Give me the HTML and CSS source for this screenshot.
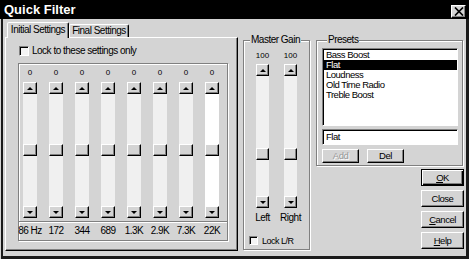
FILE: index.html
```html
<!DOCTYPE html>
<html>
<head>
<meta charset="utf-8">
<title>Quick Filter</title>
<link rel="stylesheet" href="styles.css">
</head>
<body>
<div class="win">
  <div class="titlebar">
    <span class="title">Quick Filter</span>
    <span class="close"><svg width="10" height="9" viewBox="0 0 10 9"><path d="M1 0.5 L9 8.5 M9 0.5 L1 8.5" stroke="#000" stroke-width="1.7" fill="none"/></svg></span>
  </div>
  <div class="frame">
    <div class="tabs">
      <div class="tabstrip">
        <div class="tab active">Initial Settings</div>
        <div class="tab">Final Settings</div>
      </div>
      <div class="panel">
        <div class="chk"><span class="cbox"></span><span>Lock to these settings only</span></div>
        <div class="eq">
          <div class="eq-sliders">
            <div class="band"><span class="val">0</span><div class="vs"><div class="sb up"></div><div class="track mid"><div class="thumb"></div></div><div class="sb down"></div></div></div>
            <div class="band"><span class="val">0</span><div class="vs"><div class="sb up"></div><div class="track mid"><div class="thumb"></div></div><div class="sb down"></div></div></div>
            <div class="band"><span class="val">0</span><div class="vs"><div class="sb up"></div><div class="track mid"><div class="thumb"></div></div><div class="sb down"></div></div></div>
            <div class="band"><span class="val">0</span><div class="vs"><div class="sb up"></div><div class="track mid"><div class="thumb"></div></div><div class="sb down"></div></div></div>
            <div class="band"><span class="val">0</span><div class="vs"><div class="sb up"></div><div class="track mid"><div class="thumb"></div></div><div class="sb down"></div></div></div>
            <div class="band"><span class="val">0</span><div class="vs"><div class="sb up"></div><div class="track mid"><div class="thumb"></div></div><div class="sb down"></div></div></div>
            <div class="band"><span class="val">0</span><div class="vs"><div class="sb up"></div><div class="track mid"><div class="thumb"></div></div><div class="sb down"></div></div></div>
            <div class="band"><span class="val">0</span><div class="vs"><div class="sb up"></div><div class="track mid focus"><div class="thumb"></div></div><div class="sb down"></div></div></div>
          </div>
          <div class="eq-labels">
            <span>86 Hz</span><span>172</span><span>344</span><span>689</span><span>1.3K</span><span>2.9K</span><span>7.3K</span><span>22K</span>
          </div>
        </div>
      </div>
    </div>

    <fieldset class="group master">
      <legend>Master Gain</legend>
      <div class="gains">
        <div class="gain"><span class="val">100</span><div class="vs m"><div class="sb up"></div><div class="track"><div class="thumb" style="margin-top:72px"></div></div><div class="sb down"></div></div><span class="glabel">Left</span></div>
        <div class="gain"><span class="val">100</span><div class="vs m"><div class="sb up"></div><div class="track"><div class="thumb" style="margin-top:72px"></div></div><div class="sb down"></div></div><span class="glabel">Right</span></div>
      </div>
      <div class="chk small"><span class="cbox"></span><span>Lock L/R</span></div>
    </fieldset>

    <div class="side">
      <fieldset class="group presets">
        <legend>Presets</legend>
        <div class="list">
          <div class="item">Bass Boost</div>
          <div class="item sel">Flat</div>
          <div class="item">Loudness</div>
          <div class="item">Old Time Radio</div>
          <div class="item">Treble Boost</div>
        </div>
        <div class="edit">Flat</div>
        <div class="pbtns"><span class="btn dis">Add</span><span class="btn">Del</span></div>
      </fieldset>
      <div class="dbtns">
        <span class="btn big def"><u>O</u>K</span>
        <span class="btn big">Close</span>
        <span class="btn big"><u>C</u>ancel</span>
        <span class="btn big"><u>H</u>elp</span>
      </div>
    </div>
  </div>
</div>
</body>
</html>
```

FILE: styles.css
```css
* { box-sizing: border-box; margin: 0; padding: 0; }
html, body { width: 469px; height: 259px; overflow: hidden; }
body {
  background: #d4d4d4;
  font-family: "Liberation Sans", Arial, sans-serif;
  font-size: 10px;
  letter-spacing: -0.5px;
  line-height: 12px;
  color: #000;
  white-space: nowrap;
}
.win { width: 469px; height: 259px; display: flex; flex-direction: column; }

.titlebar {
  flex: none; height: 19px; background: #000; color: #fff;
  display: flex; align-items: center; justify-content: space-between;
  padding: 0 3px 0 4px;
}
.title { font: bold 13px/19px "Liberation Sans", Arial, sans-serif; letter-spacing: 0; }
.close {
  width: 15px; height: 13px; background: #d4d4d4; margin-top: 3px;
  border: 1px solid; border-color: #fff #000 #000 #fff;
  box-shadow: inset -1px -1px #808080;
  display: flex; align-items: center; justify-content: center;
}

.frame {
  flex: 1; display: flex; align-items: flex-start;
  margin-left: 1px;
  border-left: 2px solid #1a1a1a; border-right: 3px solid #1a1a1a; border-bottom: 3px solid #1a1a1a;
  padding: 3px 0 0 2px;
}

/* tabs */
.tabs { width: 233px; flex: none; display: flex; flex-direction: column; }
.tabstrip { height: 15px; display: flex; align-items: flex-end; padding-left: 2px; }
.tab {
  height: 13px; width: 60px; text-align: center; font-size: 10px; line-height: 12px;
  border: 1px solid; border-bottom: none; border-color: #fff #000 transparent #fff;
  box-shadow: inset -1px 0 #808080; border-radius: 2px 2px 0 0;
}
.tab.active {
  height: 16px; width: 62px; margin-bottom: -1px; position: relative; z-index: 1;
  background: #d4d4d4; line-height: 14px;
}
.panel {
  height: 214px;
  border: 1px solid; border-color: #fff #000 #000 #fff;
  box-shadow: inset -1px -1px #808080;
  padding: 7px 0 0 12px;
}

.chk { display: flex; align-items: center; gap: 3px; height: 11px; margin-left: 1px; font-size: 10px; }
.cbox {
  flex: none; width: 10px; height: 10px; background: #f4f4f4;
  border: 1px solid; border-color: #808080 #fff #fff #808080;
  box-shadow: inset 1px 1px #000;
}

/* EQ */
.eq {
  margin-top: 7px; width: 210px;
  border: 1px solid #808080;
  box-shadow: inset 1px 1px #fff, 1px 1px #fff;
}
.eq-sliders {
  display: grid; grid-template-columns: repeat(8, 14px); column-gap: 12px;
  padding: 3px 0 3px 4px;
  border-bottom: 1px solid #808080;
  box-shadow: 0 1px #fff;
}
.band { display: flex; flex-direction: column; align-items: center; width: 14px; }
.val { display: block; height: 12px; font-size: 8px; letter-spacing: 0; line-height: 12px; margin-bottom: 3px; text-align: center; }
.eq-labels {
  display: grid; grid-template-columns: repeat(8, 14px); column-gap: 12px;
  padding-left: 4px; height: 18px; align-items: center; justify-items: center;
  font-size: 10px;
}

/* vertical scroll-style slider */
.vs { width: 14px; height: 136px; display: flex; flex-direction: column; }
.vs.m { width: 13px; height: 144px; }
.sb, .thumb {
  flex: none; height: 12px; background: #d4d4d4;
  border: 1px solid; border-color: #fff #000 #000 #fff;
  box-shadow: inset -1px -1px #808080;
  display: flex; align-items: center; justify-content: center;
}
.sb.up::after { content: ""; border-left: 3px solid transparent; border-right: 3px solid transparent; border-bottom: 3px solid #000; }
.sb.down::after { content: ""; border-left: 3px solid transparent; border-right: 3px solid transparent; border-top: 3px solid #000; }
.track { flex: 1; background: #f0f0f0; display: flex; flex-direction: column; }
.track.mid { justify-content: center; }
.track.focus { background: #fff; }

/* group boxes */
fieldset.group {
  flex: none;
  border: 1px solid #808080;
  box-shadow: inset 1px 1px #fff, 1px 1px #fff;
}
fieldset.group legend {
  background: #d4d4d4; padding: 0 1px; font-size: 10px; line-height: 12px;
}
.master { width: 67px; height: 216px; margin: 12px 0 0 5px; }
.master legend { margin-left: 6px; }
.gains { display: flex; gap: 15px; padding: 4px 0 0 12px; }
.gain { display: flex; flex-direction: column; align-items: center; width: 13px; }
.gain .val { margin-bottom: 2px; }
.glabel { margin-top: 4px; font-size: 10px; }
.chk.small { margin: 11px 0 0 5px; font-size: 9px; gap: 4px; }
.chk.small .cbox { width: 9px; height: 9px; }

.side { width: 148px; flex: none; margin: 12px 0 0 6px; display: flex; flex-direction: column; }
.presets { width: 147px; height: 132px; padding: 2px 4px 0 5px; }
.presets legend { margin-left: 5px; }
.list {
  height: 78px; background: #fff;
  border: 1px solid; border-color: #808080 #fff #fff #808080;
  box-shadow: inset 1px 1px #000; padding: 1px 0 0 1px;
}
.item { height: 10px; line-height: 10px; font-size: 9.5px; padding-left: 2px; }
.item.sel { background: #000; color: #fff; }
.edit {
  margin-top: 3px; height: 16px; background: #fff;
  border: 1px solid; border-color: #808080 #fff #fff #808080;
  box-shadow: inset 1px 1px #000; padding-left: 3px; line-height: 14px; font-size: 9.5px;
}
.pbtns { display: flex; gap: 8px; margin-top: 4px; }
.btn {
  display: flex; align-items: center; justify-content: center;
  background: #d4d4d4; font-size: 9.5px;
  border: 1px solid; border-color: #fff #000 #000 #fff;
  box-shadow: inset -1px -1px #808080;
}
.pbtns .btn { width: 37px; height: 14px; }
.btn.dis { color: #9a9a9a; text-shadow: 1px 1px #fff; }
.dbtns { display: flex; flex-direction: column; align-items: flex-end; gap: 4px; margin-top: 3px; }
.btn.big { width: 43px; height: 17px; }
.btn.def { border-color: #000; box-shadow: inset 1px 1px #fff, inset -1px -1px #000, inset -2px -2px #808080; }
```
